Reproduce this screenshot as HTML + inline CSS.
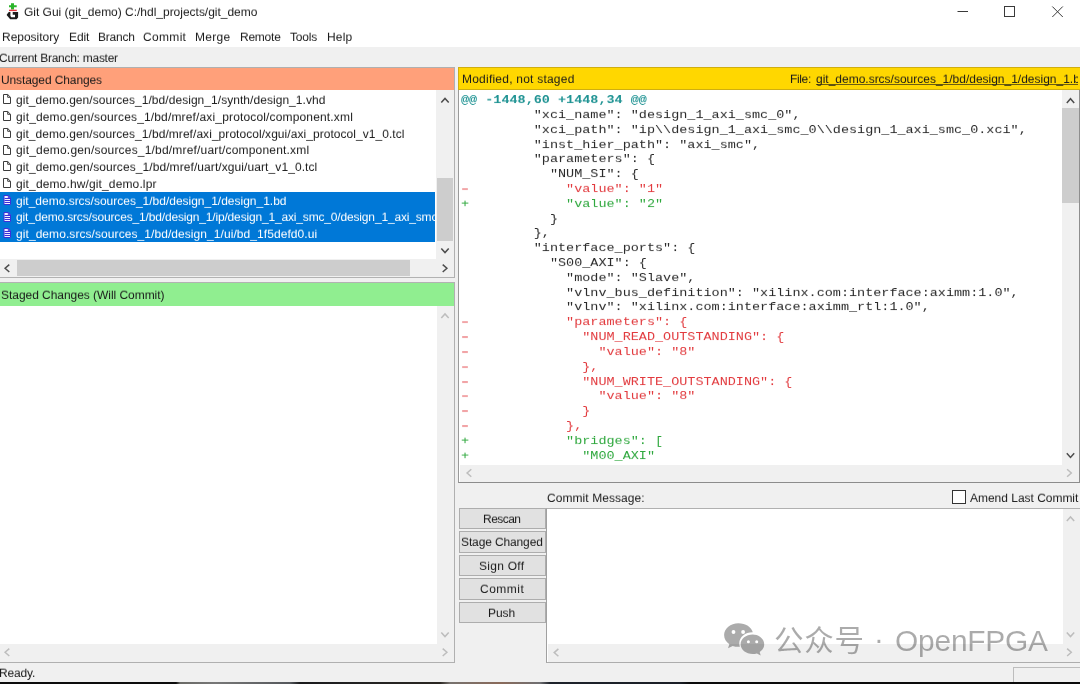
<!DOCTYPE html>
<html><head><meta charset="utf-8"><title>Git Gui</title>
<style>
*{box-sizing:border-box;margin:0;padding:0}
html,body{width:1080px;height:684px;overflow:hidden;background:#f0f0f0}
body{position:relative;font-family:"Liberation Sans","Noto Sans CJK SC",sans-serif;font-size:12px;color:#000}
.a{position:absolute}
.t{position:absolute;white-space:nowrap;line-height:16px;height:16px;will-change:transform;transform:scaleY(.93);transform-origin:0 12.16px}
svg{position:absolute;overflow:visible}
.btn{position:absolute;left:459px;width:87px;height:21.6px;background:#e1e1e1;border:1px solid #adadad}
pre{font-family:"Liberation Mono",monospace;font-size:13.47px;line-height:14.815px;position:absolute;left:460.8px;color:#2b2b2b;white-space:pre}
pre div{height:14.815px;will-change:transform;transform:scaleY(.9);transform-origin:0 11px}
pre i{display:inline-block;font-style:normal;transform:scaleX(1.55)}
.r{color:#e23b3f}.g{color:#2fa83e}.h{color:#1f9393;font-weight:bold}
</style></head><body>
<div class="a" style="left:0px;top:0px;width:1080.00px;height:26.00px;background:#fff;"></div>
<div class="a" style="left:0px;top:26px;width:1080.00px;height:20.50px;background:#fff;"></div>
<span class="t " style="left:24.04px;top:4.44px;font-size:12px;letter-spacing:-0.016px;color:#1a1a1a;">Git Gui (git_demo) C:/hdl_projects/git_demo</span>
<span class="t " style="left:1.81px;top:29.14px;font-size:12px;letter-spacing:-0.021px;color:#1a1a1a;">Repository</span>
<span class="t " style="left:68.56px;top:29.14px;font-size:12px;letter-spacing:-0.125px;color:#1a1a1a;">Edit</span>
<span class="t " style="left:97.81px;top:29.14px;font-size:12px;letter-spacing:-0.225px;color:#1a1a1a;">Branch</span>
<span class="t " style="left:143.19px;top:29.14px;font-size:12px;letter-spacing:0.325px;color:#1a1a1a;">Commit</span>
<span class="t " style="left:195.31px;top:29.14px;font-size:12px;letter-spacing:0.281px;color:#1a1a1a;">Merge</span>
<span class="t " style="left:239.56px;top:29.14px;font-size:12px;letter-spacing:-0.237px;color:#1a1a1a;">Remote</span>
<span class="t " style="left:290.31px;top:29.14px;font-size:12px;letter-spacing:-0.219px;color:#1a1a1a;">Tools</span>
<span class="t " style="left:326.56px;top:29.14px;font-size:12px;letter-spacing:0.167px;color:#1a1a1a;">Help</span>
<span class="t " style="left:-0.56px;top:49.64px;font-size:12px;letter-spacing:-0.268px;color:#1a1a1a;">Current Branch: master</span>
<svg style="left:950px;top:0" width="130" height="26" viewBox="950 0 130 26"><g fill="none" stroke="#3a3a3a" stroke-width="1"><path d="M957.5 11.5H968"/><rect x="1004.5" y="6.5" width="10" height="10"/><path d="M1052.3 6.500L1062.800 17M1062.800 6.500L1052.300 17"/></g></svg>
<svg style="left:5px;top:2px" width="16" height="19" viewBox="5 2 16 19"><path d="M11 3.3h3v2h2.700v2h-2.700v2.300h-3v-2.300h-2v-2h2z" fill="#2bb52b"/><rect x="9" y="9.7" width="7.8" height="1.400" fill="#e0343a"/><path fill-rule="evenodd" d="M8.800 11.900h9.300v5.700l-1.500 1.700h-6.400l-3.400-4.100v-.800zM10.400 11.900h2.300v2.900h2.300v2.400h-3.700l-.9-1.100z" fill="#1c1c1c"/></svg>
<div class="a" style="left:0px;top:67.6px;width:453.80px;height:22.20px;background:#ffa07a;"></div>
<span class="t " style="left:0.75px;top:71.84px;font-size:12px;letter-spacing:-0.108px;color:#1a1a1a;">Unstaged Changes</span>
<div class="a" style="left:0px;top:90.4px;width:436.30px;height:169.10px;background:#fff;"></div>
<div class="a" style="left:0px;top:191.5px;width:435.30px;height:50.40px;background:#0078d7;"></div>
<div class="a" style="left:0;top:90.4px;width:435.3px;height:152px;overflow:hidden">
<span class="t " style="left:15.53px;top:1.74px;font-size:12px;letter-spacing:0.048px;color:#1a1a1a;">git_demo.gen/sources_1/bd/design_1/synth/design_1.vhd</span>
<span class="t " style="left:15.53px;top:18.48px;font-size:12px;letter-spacing:0.154px;color:#1a1a1a;">git_demo.gen/sources_1/bd/mref/axi_protocol/component.xml</span>
<span class="t " style="left:15.53px;top:35.22px;font-size:12px;letter-spacing:0.052px;color:#1a1a1a;">git_demo.gen/sources_1/bd/mref/axi_protocol/xgui/axi_protocol_v1_0.tcl</span>
<span class="t " style="left:15.53px;top:51.96px;font-size:12px;letter-spacing:0.187px;color:#1a1a1a;">git_demo.gen/sources_1/bd/mref/uart/component.xml</span>
<span class="t " style="left:15.53px;top:68.70px;font-size:12px;letter-spacing:0.083px;color:#1a1a1a;">git_demo.gen/sources_1/bd/mref/uart/xgui/uart_v1_0.tcl</span>
<span class="t " style="left:15.53px;top:85.44px;font-size:12px;letter-spacing:0.132px;color:#1a1a1a;">git_demo.hw/git_demo.lpr</span>
<span class="t " style="left:15.53px;top:102.18px;font-size:12px;letter-spacing:-0.007px;color:#fff;">git_demo.srcs/sources_1/bd/design_1/design_1.bd</span>
<span class="t " style="left:15.53px;top:118.92px;font-size:12px;letter-spacing:-0.167px;color:#fff;">git_demo.srcs/sources_1/bd/design_1/ip/design_1_axi_smc_0/design_1_axi_smc_0.xci</span>
<span class="t " style="left:15.53px;top:135.66px;font-size:12px;letter-spacing:0.070px;color:#fff;">git_demo.srcs/sources_1/bd/design_1/ui/bd_1f5defd0.ui</span>
</div>
<svg style="left:0;top:0" width="20" height="250"><path d="M3.5 94.5h4.200l2.800 2.800v6.200h-7z" fill="#fff" stroke="#3c3c3c" stroke-width="1"/><path d="M7.7 94.5v2.800h2.800" fill="none" stroke="#3c3c3c" stroke-width="1"/><path d="M3.5 111.5h4.200l2.800 2.800v6.200h-7z" fill="#fff" stroke="#3c3c3c" stroke-width="1"/><path d="M7.7 111.5v2.800h2.800" fill="none" stroke="#3c3c3c" stroke-width="1"/><path d="M3.5 128.5h4.200l2.800 2.800v6.200h-7z" fill="#fff" stroke="#3c3c3c" stroke-width="1"/><path d="M7.7 128.5v2.800h2.800" fill="none" stroke="#3c3c3c" stroke-width="1"/><path d="M3.5 145.5h4.200l2.800 2.800v6.200h-7z" fill="#fff" stroke="#3c3c3c" stroke-width="1"/><path d="M7.7 145.5v2.800h2.800" fill="none" stroke="#3c3c3c" stroke-width="1"/><path d="M3.5 161.5h4.200l2.800 2.800v6.200h-7z" fill="#fff" stroke="#3c3c3c" stroke-width="1"/><path d="M7.7 161.5v2.800h2.800" fill="none" stroke="#3c3c3c" stroke-width="1"/><path d="M3.5 178.5h4.200l2.800 2.800v6.200h-7z" fill="#fff" stroke="#3c3c3c" stroke-width="1"/><path d="M7.7 178.5v2.800h2.800" fill="none" stroke="#3c3c3c" stroke-width="1"/><path d="M4.0 195.5h4.300l2.200 2.200v6.800h-6.500z" fill="#f0ecff" stroke="#3a30d8" stroke-width="1"/><path d="M4.5 198.5h5.500M4.5 200.5h5.500M4.5 202.5h5.500M8.3 195.5v2.200h2.200" fill="none" stroke="#3a30d8" stroke-width="1"/><path d="M4.0 212.5h4.300l2.200 2.200v6.800h-6.500z" fill="#f0ecff" stroke="#3a30d8" stroke-width="1"/><path d="M4.5 215.5h5.500M4.5 217.5h5.500M4.5 219.5h5.500M8.3 212.5v2.200h2.200" fill="none" stroke="#3a30d8" stroke-width="1"/><path d="M4.0 228.5h4.300l2.200 2.200v6.800h-6.500z" fill="#f0ecff" stroke="#3a30d8" stroke-width="1"/><path d="M4.5 231.5h5.500M4.5 233.5h5.500M4.5 235.5h5.500M8.3 228.5v2.200h2.200" fill="none" stroke="#3a30d8" stroke-width="1"/></svg>
<div class="a" style="left:436.3px;top:90.4px;width:17.10px;height:169.10px;background:#f0f0f0;"></div>
<div class="a" style="left:436.8px;top:178px;width:16.60px;height:63.40px;background:#cdcdcd;"></div>
<div class="a" style="left:0px;top:259.5px;width:453.40px;height:17.50px;background:#f0f0f0;"></div>
<div class="a" style="left:17px;top:260.2px;width:393.30px;height:15.80px;background:#cdcdcd;"></div>
<div class="a" style="left:0px;top:277px;width:454.90px;height:1.00px;background:#b2b2b2;"></div>
<div class="a" style="left:0px;top:281.5px;width:454.90px;height:1.00px;background:#b2b2b2;"></div>
<div class="a" style="left:0px;top:282.5px;width:453.80px;height:23.00px;background:#90ee90;"></div>
<span class="t " style="left:1.12px;top:287.14px;font-size:12px;letter-spacing:-0.044px;color:#1a1a1a;">Staged Changes (Will Commit)</span>
<div class="a" style="left:0px;top:305.5px;width:437.00px;height:338.00px;background:#fff;"></div>
<div class="a" style="left:437px;top:305.5px;width:16.40px;height:338.00px;background:#f0f0f0;"></div>
<div class="a" style="left:0px;top:643.5px;width:453.40px;height:17.50px;background:#f0f0f0;"></div>
<div class="a" style="left:453.8px;top:66.6px;width:1.10px;height:596.30px;background:#b0b0b0;"></div>
<div class="a" style="left:0px;top:66.6px;width:454.90px;height:1.00px;background:#b0b0b0;"></div>
<div class="a" style="left:0px;top:278px;width:456.00px;height:3.50px;background:#f0f0f0;"></div>
<div class="a" style="left:0px;top:661.8px;width:454.90px;height:1.10px;background:#b0b0b0;"></div>
<span class="t " style="left:-1.24px;top:664.74px;font-size:12px;letter-spacing:-0.173px;color:#1a1a1a;">Ready.</span>
<div class="a" style="left:0px;top:681.5px;width:1080.00px;height:2.50px;background:linear-gradient(90deg,#0c0c0c 0,#0c0c0c 176px,#6a6a66 180px,#777 215px,#55585c 290px,#1a1a1c 300px,#222 360px,#2a2622 440px,#77726e 450px,#8a6a5a 500px,#6f6f72 540px,#1e232b 550px,#1a1e26 680px,#0a0a0a 690px,#0a0a0a 100%);"></div>
<div class="a" style="left:1012.5px;top:667px;width:67.50px;height:14.50px;background:#f0f0f0;border:1px solid #bdbdbd;border-right:none;border-bottom:none"></div>
<div class="a" style="left:458.1px;top:66.5px;width:621.90px;height:23.20px;background:#ffd700;border:1px solid #cfae10;border-right:none"></div>
<span class="t " style="left:461.56px;top:71.14px;font-size:12px;letter-spacing:0.224px;color:#1a1a1a;">Modified, not staged</span>
<span class="t " style="left:789.76px;top:71.14px;font-size:12px;letter-spacing:-0.356px;color:#1a1a1a;">File:</span>
<div class="a" style="left:812px;top:67.3px;width:265.6px;height:22.7px;overflow:hidden"><span class="t " style="left:3.62px;top:3.84px;font-size:12px;letter-spacing:-0.007px;color:#1a1a1a;text-decoration:underline;text-underline-offset:1px;text-decoration-skip-ink:none;text-decoration-thickness:1px;text-decoration-color:rgba(30,30,30,.7);">git_demo.srcs/sources_1/bd/design_1/design_1.bd</span></div>
<div class="a" style="left:458px;top:90px;width:622.00px;height:393.00px;background:#fff;border-left:1.5px solid #9a9a9a;border-bottom:1.1px solid #8c8c8c"></div>
<div class="a" style="left:1062.3px;top:90px;width:16.30px;height:374.60px;background:#f0f0f0;"></div>
<div class="a" style="left:1062.3px;top:108px;width:16.30px;height:95.40px;background:#cdcdcd;"></div>
<div class="a" style="left:1078.5px;top:90px;width:1.10px;height:393.00px;background:#8e8e8e;"></div>
<div class="a" style="left:1079.6px;top:67px;width:0.40px;height:416.00px;background:#f4f4f4;"></div>
<div class="a" style="left:460px;top:464.6px;width:618.60px;height:17.00px;background:#f0f0f0;"></div>
<pre style="top:93.08px"><div class="h">@@ -1448,60 +1448,34 @@</div><div>         "xci_name": "design_1_axi_smc_0",</div><div>         "xci_path": "ip\\design_1_axi_smc_0\\design_1_axi_smc_0.xci",</div><div>         "inst_hier_path": "axi_smc",</div><div>         "parameters": {</div><div>           "NUM_SI": {</div><div class="r"><i>-</i>            "value": "1"</div><div class="g">+            "value": "2"</div><div>           }</div><div>         },</div><div>         "interface_ports": {</div><div>           "S00_AXI": {</div><div>             "mode": "Slave",</div><div>             "vlnv_bus_definition": "xilinx.com:interface:aximm:1.0",</div><div>             "vlnv": "xilinx.com:interface:aximm_rtl:1.0",</div><div class="r"><i>-</i>            "parameters": {</div><div class="r"><i>-</i>              "NUM_READ_OUTSTANDING": {</div><div class="r"><i>-</i>                "value": "8"</div><div class="r"><i>-</i>              },</div><div class="r"><i>-</i>              "NUM_WRITE_OUTSTANDING": {</div><div class="r"><i>-</i>                "value": "8"</div><div class="r"><i>-</i>              }</div><div class="r"><i>-</i>            },</div><div class="g">+            "bridges": [</div><div class="g">+              "M00_AXI"</div></pre>
<span class="t " style="left:547.44px;top:490.04px;font-size:12px;letter-spacing:0.067px;color:#1a1a1a;">Commit Message:</span>
<div class="a" style="left:952.1px;top:490.2px;width:13.70px;height:13.60px;background:#fff;border:1px solid #333"></div>
<span class="t " style="left:969.60px;top:490.04px;font-size:12px;letter-spacing:-0.022px;color:#1a1a1a;">Amend Last Commit</span>
<div class="btn" style="top:507.8px"></div><span class="t " style="left:483.26px;top:510.84px;font-size:12px;letter-spacing:-0.540px;color:#1a1a1a;">Rescan</span>
<div class="btn" style="top:531.3px"></div><span class="t " style="left:461.23px;top:534.34px;font-size:12px;letter-spacing:-0.126px;color:#1a1a1a;">Stage Changed</span>
<div class="btn" style="top:554.8px"></div><span class="t " style="left:479.23px;top:557.84px;font-size:12px;letter-spacing:0.264px;color:#1a1a1a;">Sign Off</span>
<div class="btn" style="top:578.3px"></div><span class="t " style="left:479.84px;top:581.34px;font-size:12px;letter-spacing:0.505px;color:#1a1a1a;">Commit</span>
<div class="btn" style="top:601.8px"></div><span class="t " style="left:488.26px;top:604.84px;font-size:12px;letter-spacing:-0.096px;color:#1a1a1a;">Push</span>
<div class="a" style="left:546.4px;top:507.8px;width:533.60px;height:155.10px;background:#fff;border-left:1.2px solid #a0a0a0;border-top:1.2px solid #b0b0b0;border-bottom:1.2px solid #adadad"></div>
<div class="a" style="left:1062.6px;top:509px;width:17.40px;height:135.50px;background:#f0f0f0;"></div>
<div class="a" style="left:547.6px;top:644.3px;width:532.40px;height:17.40px;background:#f0f0f0;"></div>
<svg style="left:0;top:0" width="1080" height="684"><polyline points="441.3,102.6 445.0,98.4 448.7,102.6" fill="none" stroke="#4d4d4d" stroke-width="1.5"/><polyline points="441.3,248.4 445.0,252.6 448.7,248.4" fill="none" stroke="#4d4d4d" stroke-width="1.5"/><polyline points="9.3,264.6 5.1,268.3 9.3,272.0" fill="none" stroke="#4d4d4d" stroke-width="1.5"/><polyline points="442.7,264.6 446.9,268.3 442.7,272.0" fill="none" stroke="#4d4d4d" stroke-width="1.5"/><polyline points="441.3,318.1 445.0,313.9 448.7,318.1" fill="none" stroke="#bdbdbd" stroke-width="1.5"/><polyline points="441.3,632.4 445.0,636.6 448.7,632.4" fill="none" stroke="#bdbdbd" stroke-width="1.5"/><polyline points="9.3,648.6 5.1,652.3 9.3,656.0" fill="none" stroke="#bdbdbd" stroke-width="1.5"/><polyline points="442.7,648.6 446.9,652.3 442.7,656.0" fill="none" stroke="#bdbdbd" stroke-width="1.5"/><polyline points="1066.8,102.9 1070.5,98.7 1074.2,102.9" fill="none" stroke="#4d4d4d" stroke-width="1.5"/><polyline points="1066.8,453.2 1070.5,457.4 1074.2,453.2" fill="none" stroke="#4d4d4d" stroke-width="1.5"/><polyline points="471.3,469.3 467.1,473.0 471.3,476.7" fill="none" stroke="#bdbdbd" stroke-width="1.5"/><polyline points="1067.1,469.3 1071.3,473.0 1067.1,476.7" fill="none" stroke="#bdbdbd" stroke-width="1.5"/><polyline points="1066.8,521.1 1070.5,516.9 1074.2,521.1" fill="none" stroke="#bdbdbd" stroke-width="1.5"/><polyline points="1066.8,632.4 1070.5,636.6 1074.2,632.4" fill="none" stroke="#bdbdbd" stroke-width="1.5"/><polyline points="558.4,648.9 554.2,652.6 558.4,656.3" fill="none" stroke="#bdbdbd" stroke-width="1.5"/><polyline points="1067.1,648.6 1071.3,652.3 1067.1,656.0" fill="none" stroke="#bdbdbd" stroke-width="1.5"/></svg>
<svg style="left:720px;top:620px" width="50" height="40" viewBox="720 620 50 40"><g fill="#000" fill-opacity="0.33"><path fill-rule="evenodd" d="M738.4 623.2c-7.9 0-14.3 5.3-14.3 11.9c0 3.7 2 7 5.200 9.200l-1.300 4l4.700-2.400c1.800.6 3.700.9 5.700.9c.5 0 1 0 1.500-.1c-.4-1.100-.6-2.200-.6-3.400c0-6.100 5.900-11 13.200-11c.1 0 .2 0 .3 0c-1.300-5.200-7.100-9.100-14.400-9.100zM733.500 630.100a1.900 1.900 0 1 1 0 3.800a1.900 1.900 0 0 1 0-3.800zM743.100 630.100a1.900 1.900 0 1 1 0 3.800a1.900 1.900 0 0 1 0-3.800z"/><path fill-rule="evenodd" d="M752.700 634.400c-6.700 0-12.100 4.400-12.100 9.800s5.400 9.800 12.100 9.800c1.500 0 2.900-.2 4.200-.6l3.800 2l-1-3.300c2.700-1.800 4.500-4.600 4.500-7.900c0-5.400-5.400-9.800-11.500-9.800zM748.400 640.200a1.500 1.500 0 1 1 0 3a1.500 1.500 0 0 1 0-3zM756.700 640.200a1.500 1.500 0 1 1 0 3a1.500 1.500 0 0 1 0-3z"/></g></svg>
<span class="t" style="transform:none;left:773.60px;top:621.08px;height:40px;line-height:40px;font-size:29.5px;letter-spacing:0.800px;color:rgba(0,0,0,0.33);">公众号</span>
<span class="t" style="transform:none;left:873.80px;top:618.98px;height:40px;line-height:40px;font-size:29.5px;letter-spacing:0.000px;color:rgba(0,0,0,0.33);">·</span>
<span class="t" style="transform:none;left:895.20px;top:621.04px;height:40px;line-height:40px;font-size:29.9px;letter-spacing:-0.207px;color:rgba(0,0,0,0.33);">OpenFPGA</span>
</body></html>
